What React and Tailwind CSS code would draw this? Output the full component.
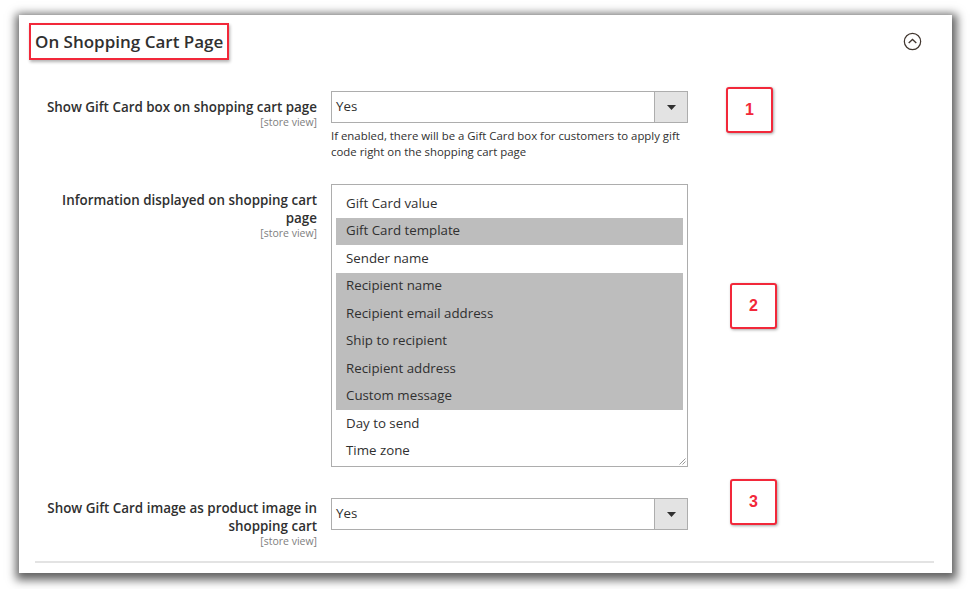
import React from "react";

const options = [
  { label: "Gift Card value", on: false },
  { label: "Gift Card template", on: true },
  { label: "Sender name", on: false },
  { label: "Recipient name", on: true },
  { label: "Recipient email address", on: true },
  { label: "Ship to recipient", on: true },
  { label: "Recipient address", on: true },
  { label: "Custom message", on: true },
  { label: "Day to send", on: false },
  { label: "Time zone", on: false },
];

const Marker = ({ n, className = "" }) => (
  <div
    className={`w-[47px] h-[46px] shrink-0 border-2 border-[#f2283a] rounded-[3px] bg-white shadow-[1px_1px_3px_rgba(0,0,0,0.35)] flex items-center justify-center text-[#f2283a] text-[16px] font-bold font-['Liberation_Sans',Arial,sans-serif] ${className}`}
  >
    {n}
  </div>
);

const Label = ({ lines, className = "" }) => (
  <div className={`w-[282px] shrink-0 text-right ${className}`}>
    {lines.map((l) => (
      <div key={l} className="text-[13.4px] leading-[18px] font-semibold text-[#303030] whitespace-nowrap">{l}</div>
    ))}
    <div className="text-[10.5px] leading-[12px] text-[#808080]">[store view]</div>
  </div>
);

const Select = ({ value }) => (
  <div className="flex h-[32px] w-[357px] border border-[#adadad] bg-white">
    <div className="flex-1 flex items-center pl-[4px] text-[13.3px] text-[#303030]">{value}</div>
    <div className="w-[33px] flex items-center justify-center bg-[#e3e3e3] border-l border-[#adadad]">
      <svg width="9" height="5" viewBox="0 0 9 5"><path d="M0 0h9L4.5 5z" fill="#303030" /></svg>
    </div>
  </div>
);

export default function App() {
  return (
    <div className="w-[971px] h-[589px] bg-white pt-[15px] pl-[19px] font-['Open_Sans',sans-serif]">
      <div className="w-[933px] h-[558px] bg-white shadow-[1px_3px_9px_4px_rgba(0,0,0,0.62)] pt-[8px] px-[16px] flex flex-col">
        {/* titulo */}
        <div className="flex items-center justify-between">
          <div className="-ml-[6px] h-[37px] px-[4px] border-2 border-[#f2283a] shadow-[1px_2px_3px_rgba(0,0,0,0.3)] flex items-center">
            <span className="text-[17px] font-semibold text-[#303030]">On Shopping Cart Page</span>
          </div>
          <svg width="19" height="19" viewBox="0 0 20 20" className="mr-[14px]">
            <circle cx="10" cy="10" r="8.6" fill="none" stroke="#41362f" strokeWidth="1.3" />
            <path d="M6 11.5L10 7.8l4 3.7" fill="none" stroke="#41362f" strokeWidth="1.4" />
          </svg>
        </div>

        {/* linha 1 */}
        <div className="flex items-start gap-[14px] mt-[31px]">
          <Label lines={["Show Gift Card box on shopping cart page"]} className="pt-[7px]" />
          <div className="w-[357px]">
            <Select value="Yes" />
            <p className="mt-[5px] text-[11.4px] leading-[16px] text-[#303030]">
              If enabled, there will be a Gift Card box for customers to apply gift code right on the shopping cart page
            </p>
          </div>
          <Marker n="1" className="ml-[24px] -mt-[4px]" />
        </div>

        {/* linha 2 */}
        <div className="flex items-start gap-[14px] mt-[24px]">
          <Label lines={["Information displayed on shopping cart", "page"]} className="pt-[7px]" />
          <div className="relative w-[357px] h-[283px] border border-[#adadad] bg-white pt-[5px] px-[4px]">
            {options.map((o) => (
              <div
                key={o.label}
                className={`h-[27.5px] flex items-center px-[10px] text-[13.3px] text-[#303030] ${o.on ? "bg-[#bdbdbd]" : ""}`}
              >
                {o.label}
              </div>
            ))}
            <svg width="7" height="7" viewBox="0 0 7 7" className="absolute right-[1px] bottom-[1px]">
              <path d="M6.5 0.5L0.5 6.5M6.5 3.5L3.5 6.5" stroke="#9a9a9a" strokeWidth="1" />
            </svg>
          </div>
          <Marker n="2" className="ml-[28px] mt-[99px]" />
        </div>

        {/* linha 3 */}
        <div className="flex items-start gap-[14px] mt-[31px]">
          <Label lines={["Show Gift Card image as product image in", "shopping cart"]} className="pt-[1px]" />
          <Select value="Yes" />
          <Marker n="3" className="ml-[28px] -mt-[19px]" />
        </div>

        <div className="mt-[14px] h-[2px] bg-[#e3e3e3] mr-[2px]" />
      </div>
    </div>
  );
}
